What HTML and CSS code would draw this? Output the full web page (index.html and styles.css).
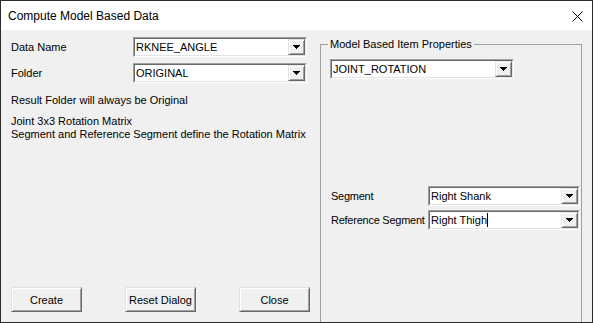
FILE: index.html
```html
<!DOCTYPE html>
<html>
<head>
<meta charset="utf-8">
<link rel="stylesheet" href="styles.css">
</head>
<body>
<div class="window">
  <div class="titlebar">
    <span class="title">Compute Model Based Data</span>
    <svg class="close" width="11" height="11" viewBox="0 0 11 11"><path d="M0.5 0.5 L10.5 10.5 M10.5 0.5 L0.5 10.5" stroke="#000" stroke-width="1" fill="none"/></svg>
  </div>
  <div class="body">
    <div class="left">
      <div class="field">
        <span class="label">Data Name</span>
        <div class="combo w-main"><div class="combo-in"><span class="value">RKNEE_ANGLE</span><span class="drop"><svg width="7" height="4" viewBox="0 0 7 4"><polygon points="0,0 7,0 3.5,4" fill="#000"/></svg></span></div></div>
      </div>
      <div class="field">
        <span class="label">Folder</span>
        <div class="combo w-main"><div class="combo-in"><span class="value">ORIGINAL</span><span class="drop"><svg width="7" height="4" viewBox="0 0 7 4"><polygon points="0,0 7,0 3.5,4" fill="#000"/></svg></span></div></div>
      </div>
      <p class="note first">Result Folder will always be Original</p>
      <p class="note">Joint 3x3 Rotation Matrix<br>Segment and Reference Segment define the Rotation Matrix</p>
      <div class="buttons">
        <button class="btn">Create</button>
        <button class="btn">Reset Dialog</button>
        <button class="btn">Close</button>
      </div>
    </div>
    <div class="right">
      <fieldset class="group">
        <legend class="legend">Model Based Item Properties</legend>
        <div class="combo w-type"><div class="combo-in"><span class="value">JOINT_ROTATION</span><span class="drop"><svg width="7" height="4" viewBox="0 0 7 4"><polygon points="0,0 7,0 3.5,4" fill="#000"/></svg></span></div></div>
        <div class="seg-rows">
          <div class="field">
            <span class="label seg">Segment</span>
            <div class="combo w-seg"><div class="combo-in"><span class="value">Right Shank</span><span class="drop"><svg width="7" height="4" viewBox="0 0 7 4"><polygon points="0,0 7,0 3.5,4" fill="#000"/></svg></span></div></div>
          </div>
          <div class="field tight">
            <span class="label seg">Reference Segment</span>
            <div class="combo w-seg"><div class="combo-in"><span class="value">Right Thigh<span class="caret"></span></span><span class="drop"><svg width="7" height="4" viewBox="0 0 7 4"><polygon points="0,0 7,0 3.5,4" fill="#000"/></svg></span></div></div>
          </div>
        </div>
      </fieldset>
    </div>
  </div>
</div>
</body>
</html>
```

FILE: styles.css
```css
html, body {
  margin: 0;
  padding: 0;
}
body {
  width: 593px;
  height: 323px;
  overflow: hidden;
  background: #f0f0f0;
  font-family: "Liberation Sans", Arial, sans-serif;
  font-size: 11px;
  color: #000;
}
.window {
  box-sizing: border-box;
  width: 593px;
  height: 323px;
  border: 1px solid #2b2b2b;
  display: flex;
  flex-direction: column;
  overflow: hidden;
  background: #f0f0f0;
}
.titlebar {
  flex: none;
  height: 29px;
  background: #fff;
  display: flex;
  align-items: center;
  justify-content: space-between;
  padding: 0 9px 0 7px;
}
.title {
  font-size: 12px;
  line-height: 14px;
}
.close {
  display: block;
  margin-top: 2px;
}
.body {
  flex: 1;
  display: flex;
  min-height: 0;
}
.left {
  width: 319px;
  flex: none;
  box-sizing: border-box;
  padding: 7px 0 10px 10px;
  display: flex;
  flex-direction: column;
}
.field {
  display: flex;
  align-items: center;
  height: 20px;
}
.field + .field {
  margin-top: 6px;
}
.field.tight {
  margin-top: 4px;
}
.label {
  width: 122px;
  flex: none;
  line-height: 13px;
  white-space: nowrap;
  padding-top: 1px;
}
.label.seg {
  width: 96px;
  padding-left: 1px;
  letter-spacing: -0.25px;
}
.combo {
  box-sizing: border-box;
  height: 20px;
  flex: none;
  display: flex;
  border: 1px solid;
  border-color: #a0a0a0 #fff #fff #a0a0a0;
}
.w-main { width: 174px; }
.w-type { width: 184px; }
.w-seg { width: 152px; }
.combo-in {
  flex: 1;
  display: flex;
  border: 1px solid;
  border-color: #696969 #e3e3e3 #e3e3e3 #696969;
  background: #fff;
  min-width: 0;
}
.value {
  flex: 1;
  padding-left: 1px;
  line-height: 16px;
  white-space: nowrap;
  overflow: hidden;
  display: flex;
  align-items: center;
}
.caret {
  display: inline-block;
  width: 1px;
  height: 14px;
  background: #000;
}
.drop {
  flex: none;
  width: 17px;
  box-sizing: border-box;
  border: 1px solid;
  border-color: #e3e3e3 #696969 #696969 #e3e3e3;
  box-shadow: inset 1px 1px 0 #fff, inset -1px -1px 0 #a0a0a0;
  background: #f0f0f0;
  display: flex;
  align-items: center;
  justify-content: center;
}
.drop svg {
  display: block;
  shape-rendering: crispEdges;
}
.note {
  margin: 0;
  line-height: 13px;
  white-space: nowrap;
}
.note.first {
  margin-top: 11px;
  margin-bottom: 8px;
}
.buttons {
  margin-top: auto;
  display: flex;
  gap: 43px;
}
.btn {
  width: 71px;
  height: 25px;
  box-sizing: border-box;
  margin: 0;
  padding: 0;
  font-family: "Liberation Sans", Arial, sans-serif;
  font-size: 11px;
  color: #000;
  background: #f0f0f0;
  border: 1px solid;
  border-color: #e3e3e3 #696969 #696969 #e3e3e3;
  box-shadow: inset 1px 1px 0 #fff, inset -1px -1px 0 #a0a0a0;
}
.right {
  flex: 1;
  display: flex;
  flex-direction: column;
  padding-right: 10px;
  min-height: 0;
}
.group {
  flex: 1;
  margin: 8px 0 -20px 0;
  padding: 0 0 0 9px;
  border: 1px solid #a0a0a0;
  min-width: 0;
}
.legend {
  padding: 0 2px;
  margin-left: -2px;
  line-height: 13px;
}
.group > .combo {
  margin-top: 8px;
}
.seg-rows {
  margin-top: 107px;
}
.label.seg + .combo {
  margin-left: 1px;
}
```
